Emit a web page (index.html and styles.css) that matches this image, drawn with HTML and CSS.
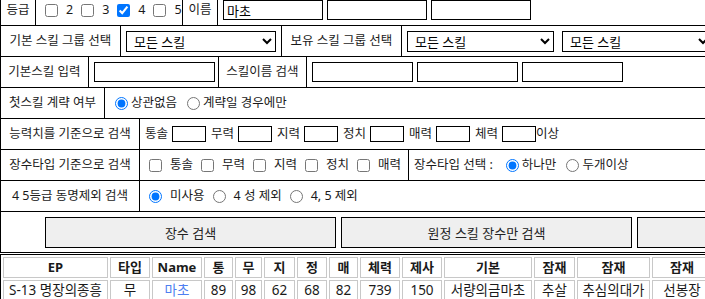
FILE: index.html
```html
<!DOCTYPE html>
<html lang="ko">
<head>
    <meta charset="UTF-8">
    <meta name="viewport" content="width=device-width, initial-scale=1.0">
    <title>장수 검색</title>
    <link rel="stylesheet" href="styles.css">
</head>
<body>
    <div class="search">
        <!-- 등급 / 이름 -->
        <div class="row">
            <div class="cell lab w-grade">등급</div>
            <div class="cell w-grades">
                <label class="opt"><input type="checkbox">2</label>
                <label class="opt"><input type="checkbox">3</label>
                <label class="opt"><input type="checkbox" checked>4</label>
                <label class="opt"><input type="checkbox">5</label>
            </div>
            <div class="cell lab w-grade">이름</div>
            <div class="cell last inputs">
                <input type="text" class="txt name" value="마초">
                <input type="text" class="txt name">
                <input type="text" class="txt name">
            </div>
        </div>

        <!-- 스킬 그룹 -->
        <div class="row">
            <div class="cell lab w-group">기본 스킬 그룹 선택</div>
            <div class="cell w-groupsel">
                <select class="sel"><option>모든 스킬</option></select>
            </div>
            <div class="cell lab w-group">보유 스킬 그룹 선택</div>
            <div class="cell last selects">
                <select class="sel sel2"><option>모든 스킬</option></select>
                <select class="sel"><option>모든 스킬</option></select>
            </div>
        </div>

        <!-- 스킬 입력 -->
        <div class="row">
            <div class="cell lab w-skill">기본스킬 입력</div>
            <div class="cell w-skillin">
                <input type="text" class="txt basic">
            </div>
            <div class="cell lab w-skill">스킬이름 검색</div>
            <div class="cell last inputs">
                <input type="text" class="txt skill">
                <input type="text" class="txt skill">
                <input type="text" class="txt skill">
            </div>
        </div>

        <!-- 첫스킬 -->
        <div class="row">
            <div class="cell lab w-first">첫스킬 계략 여부</div>
            <div class="cell last">
                <label class="pick"><input type="radio" name="first" checked>상관없음</label>
                <label class="pick"><input type="radio" name="first">계략일 경우에만</label>
            </div>
        </div>

        <!-- 능력치 -->
        <div class="row">
            <div class="cell lab w-wide">능력치를 기준으로 검색</div>
            <div class="cell last stats">
                <label>통솔<input type="text" class="txt num"></label>
                <label>무력<input type="text" class="txt num"></label>
                <label>지력<input type="text" class="txt num"></label>
                <label>정치<input type="text" class="txt num"></label>
                <label>매력<input type="text" class="txt num"></label>
                <label>체력<input type="text" class="txt num">이상</label>
            </div>
        </div>

        <!-- 장수타입 -->
        <div class="row">
            <div class="cell lab w-wide">장수타입 기준으로 검색</div>
            <div class="cell w-types">
                <label class="opt"><input type="checkbox">통솔</label>
                <label class="opt"><input type="checkbox">무력</label>
                <label class="opt"><input type="checkbox">지력</label>
                <label class="opt"><input type="checkbox">정치</label>
                <label class="opt"><input type="checkbox">매력</label>
            </div>
            <div class="cell last">
                <span class="type-title">장수타입 선택 :</span>
                <label class="pick"><input type="radio" name="type" checked>하나만</label>
                <label class="pick"><input type="radio" name="type">두개이상</label>
            </div>
        </div>

        <!-- 동명제외 -->
        <div class="row">
            <div class="cell lab w-wide">4 5등급 동명제외 검색</div>
            <div class="cell last">
                <label class="opt"><input type="radio" name="same" checked>미사용</label>
                <label class="opt"><input type="radio" name="same">4 성 제외</label>
                <label class="opt"><input type="radio" name="same">4, 5 제외</label>
            </div>
        </div>

        <div class="buttons">
            <button class="btn">장수 검색</button>
            <button class="btn">원정 스킬 장수만 검색</button>
            <button class="btn" title="초기화"></button>
        </div>
    </div>

    <table class="result">
        <tr>
            <th class="c-ep">EP</th>
            <th class="c-type">타입</th>
            <th class="c-name">Name</th>
            <th class="c-s1">통</th>
            <th class="c-s2">무</th>
            <th class="c-s3">지</th>
            <th class="c-s4">정</th>
            <th class="c-s5">매</th>
            <th class="c-hp">체력</th>
            <th class="c-hp">제사</th>
            <th class="c-base">기본</th>
            <th class="c-p1">잠재</th>
            <th class="c-p2">잠재</th>
            <th class="c-p3">잠재</th>
        </tr>
        <tr>
            <td>S-13 명장의종흥</td>
            <td>무</td>
            <td class="hero">마초</td>
            <td>89</td>
            <td>98</td>
            <td>62</td>
            <td>68</td>
            <td>82</td>
            <td>739</td>
            <td>150</td>
            <td>서량의금마초</td>
            <td>추살</td>
            <td>추심의대가</td>
            <td>선봉장</td>
        </tr>
    </table>
</body>
</html>
```

FILE: styles.css
```css
/* General */
html, body {
    margin: 0;
    overflow: hidden;
}

body {
    font-family: "Noto Sans", "Noto Sans CJK KR", sans-serif;
    font-size: 12.5px;
    line-height: 16px;
    color: #1a1a1a;
    background: #fff;
}

input, select, button {
    font-family: "Noto Sans", "Noto Sans CJK KR", sans-serif;
    font-size: 13px;
}

/* Search form */
.search {
    width: 780px;
    margin-top: -5px;
    border-left: 1px solid #000;
}

.row {
    display: flex;
    height: 31px;
    border-bottom: 1px solid #000;
    box-sizing: border-box;
}

.cell {
    flex: none;
    display: flex;
    align-items: center;
    padding: 0 5px;
    border-right: 1px solid #000;
    box-sizing: border-box;
    white-space: nowrap;
}

.cell.last {
    flex: 1;
    border-right: none;
}

.cell.lab {
    justify-content: center;
    padding: 0;
}

.w-grade { width: 35px; }
.w-grades { width: 147px; }
.w-group { width: 120px; }
.w-groupsel { width: 161px; }
.w-skill { width: 88px; }
.w-skillin { width: 130px; }
.w-first { width: 104px; }
.w-wide { width: 139px; }
.w-types { width: 269px; }

.inputs {
    gap: 4px;
}

.selects {
    gap: 8px;
    padding-left: 5px;
}

.txt {
    height: 20px;
    margin: 0;
    padding: 0 3px;
    border: 1px solid #000;
    border-radius: 0;
    box-sizing: border-box;
    color: #000;
    outline: none;
}

.txt.name { width: 100px; }
.txt.basic { width: 121px; }
.txt.skill { width: 101px; }

.sel {
    width: 150px;
    height: 21px;
    margin: 0;
    padding: 0 3px;
    border: 1px solid #000;
    border-radius: 0;
    background: #fff;
    color: #000;
}

.sel2 { width: 147px; }

/* checkbox / radio groups */
.opt, .pick {
    display: inline-flex;
    align-items: center;
}

.opt {
    margin-right: 4px;
}

.opt input {
    margin: 0 8px 0 4px;
}

.pick {
    margin-right: 5px;
}

.pick input {
    margin: 0 3px 0 5px;
}

.type-title {
    margin-right: 8px;
}

/* stats */
.stats {
    gap: 5px;
}

.stats label {
    display: inline-flex;
    align-items: center;
}

.txt.num {
    width: 34px;
    height: 16px;
    margin-left: 4px;
}

/* buttons */
.buttons {
    display: flex;
    gap: 5px;
    height: 41px;
    padding: 5px 0 4px 44px;
    border-bottom: 1px solid #000;
    box-sizing: border-box;
    white-space: nowrap;
}

.btn {
    flex: none;
    width: 291px;
    height: 31px;
    margin: 0;
    border: 1px solid #000;
    border-radius: 0;
    background: #efefef;
    color: #222;
}

/* result table */
.result {
    width: 715px;
    table-layout: fixed;
    margin-top: 1px;
    border: 1px solid #000;
    border-spacing: 2px;
    font-size: 13.5px;
    white-space: nowrap;
}

.result th,
.result td {
    box-sizing: border-box;
    padding: 0;
    line-height: 19px;
    border: 1px solid #c8c8c8;
    text-align: center;
    color: #1a1a1a;
    overflow: hidden;
}

.result th {
    font-size: 13px;
    font-weight: bold;
}

.result td.hero {
    color: #4f7ff0;
}

.c-ep { width: 105px; }
.c-type { width: 40px; }
.c-name { width: 50px; }
.c-s1 { width: 29px; }
.c-s2 { width: 27px; }
.c-s3 { width: 31px; }
.c-s4 { width: 30px; }
.c-s5 { width: 29px; }
.c-hp { width: 40px; }
.c-base { width: 88px; }
.c-p1 { width: 41px; }
.c-p2 { width: 73px; }
.c-p3 { width: 60px; }
```
